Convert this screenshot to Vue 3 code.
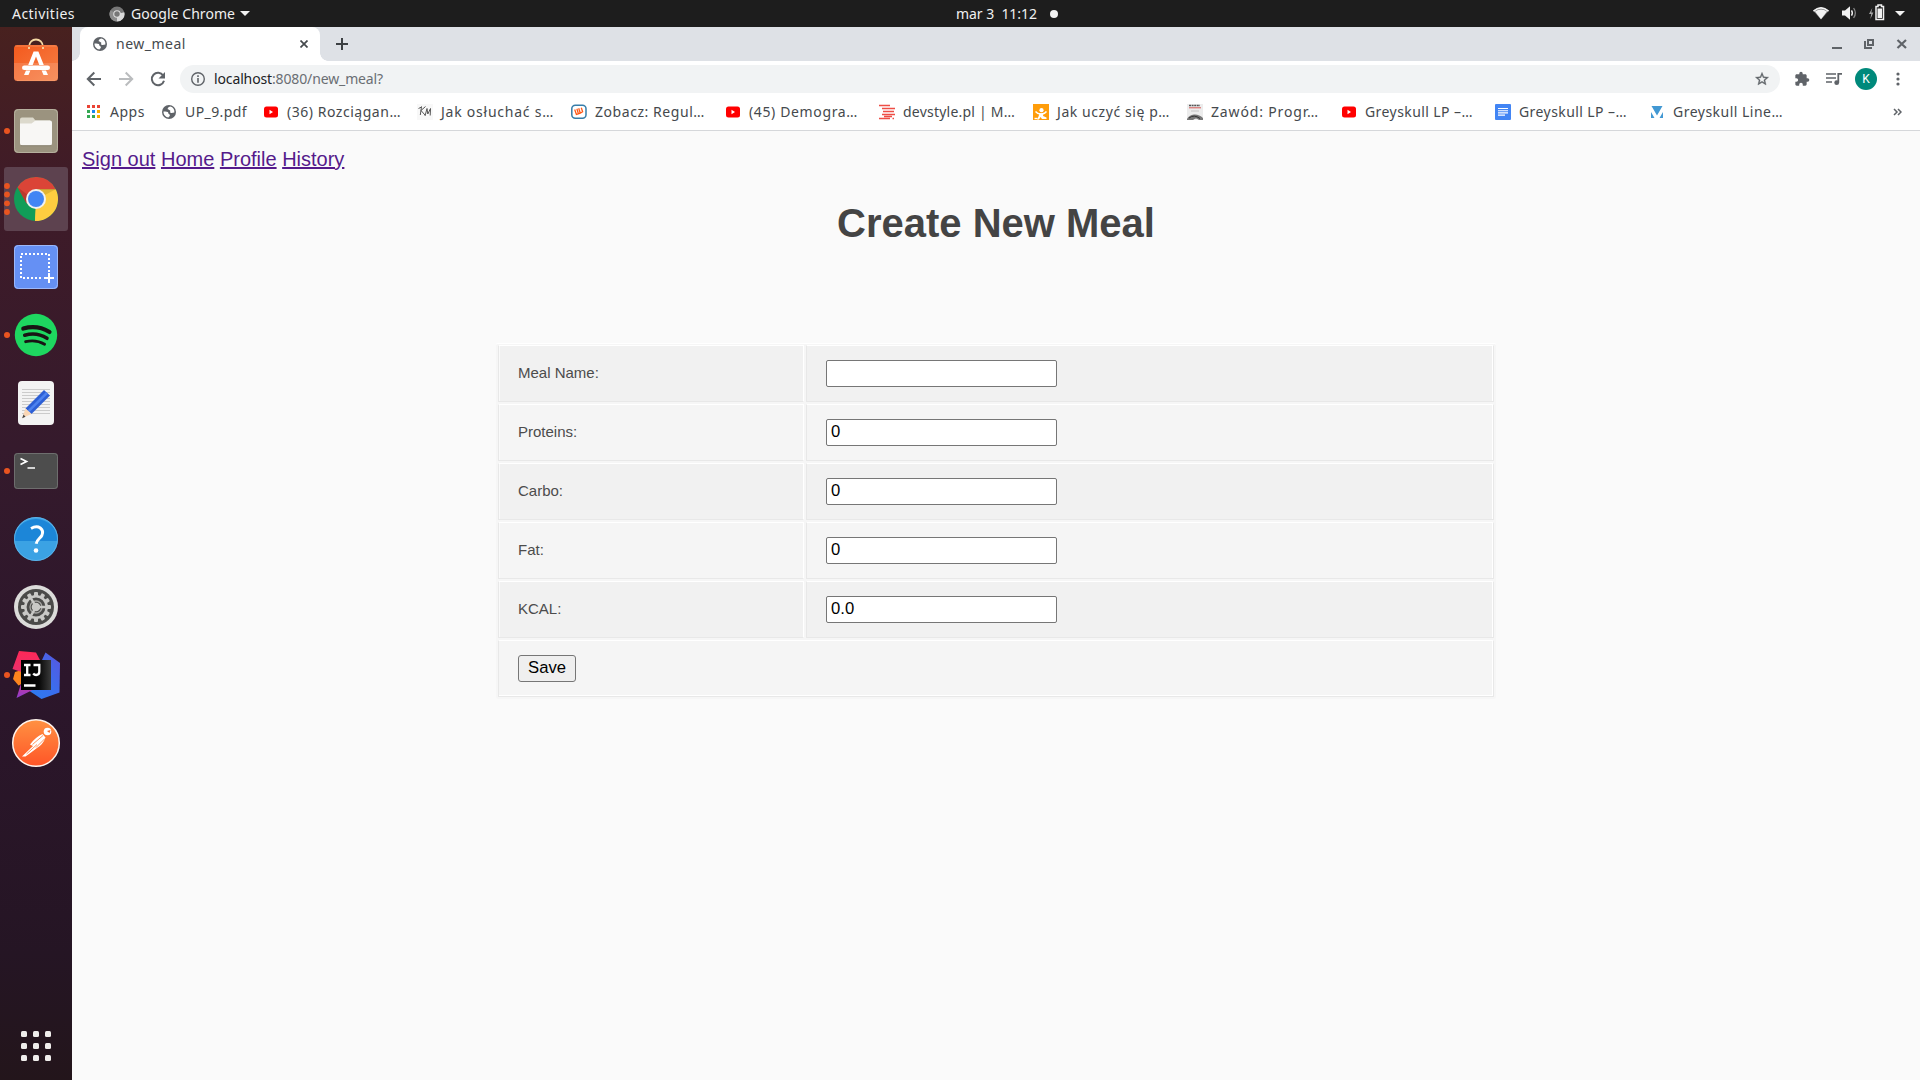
<script setup>
import { ref } from 'vue'

// Spreads the letters of a label so that it fills the given width in pixels.
const vFit = {
  mounted(el, { value }) {
    const range = document.createRange()
    range.selectNodeContents(el)
    const natural = range.getBoundingClientRect().width
    el.style.letterSpacing = (value - natural) / el.textContent.length + 'px'
  },
}

const bookmarks = [
  { icon: 'apps', text: 'Apps', fit: 35, width: 75 },
  { icon: 'globe', text: 'UP_9.pdf', fit: 62, width: 102 },
  { icon: 'youtube', text: '(36) Rozciągan…', fit: 114, width: 154 },
  { icon: 'km', text: 'Jak osłuchać s…', fit: 113, width: 154 },
  { icon: 'wykop', text: 'Zobacz: Regul…', fit: 110, width: 154 },
  { icon: 'youtube', text: '(45) Demogra…', fit: 109, width: 154 },
  { icon: 'devstyle', text: 'devstyle.pl | M…', fit: 112, width: 154 },
  { icon: 'orange', text: 'Jak uczyć się p…', fit: 113, width: 154 },
  { icon: 'book', text: 'Zawód: Progr…', fit: 108, width: 154 },
  { icon: 'youtube', text: 'Greyskull LP –…', fit: 108, width: 154 },
  { icon: 'docs', text: 'Greyskull LP –…', fit: 108, width: 154 },
  { icon: 'vee', text: 'Greyskull Line…', fit: 110, width: 154 },
]

const fields = ref([
  { label: 'Meal Name:', value: '' },
  { label: 'Proteins:', value: '0' },
  { label: 'Carbo:', value: '0' },
  { label: 'Fat:', value: '0' },
  { label: 'KCAL:', value: '0.0' },
])

const links = ['Sign out', 'Home', 'Profile', 'History']
const teeth = Array.from({ length: 12 }, (_, i) => i * 30)
const globeLand = 'M9.300 2.600C7.300 3 6.200 4.300 6.900 5.400c.6.9 2 .3 2.300 1.200.3 1-.6 1.500.3 2.200.9.600 2.300.2 3.900-.2.4-2.800-1.200-5.300-4.100-6zM2.500 7.500c1.600-.2 3.300-.2 4.300.5.8.6.2 1.500 1 2 .8.400 1.300.9 1 1.800-.2.700-.9.600-1.300 1.800C4.700 13.200 2.300 10.700 2.500 7.500z'
</script>

<template>
  <div class="desktop">
    <header class="panel">
      <div class="panel-left">
        <span v-fit="63" class="activities">Activities</span>
        <svg class="mini-chrome" width="16" height="16" viewBox="0 0 16 16">
          <circle cx="8" cy="8" r="7.500" fill="#777" />
          <path d="M8 8 15.300 6.200A7.500 7.500 0 0 1 8 15.500z" fill="#d8d8d8" />
          <path d="M8 8 1.500 4.200A7.500 7.500 0 0 0 8 15.500z" fill="#8d8d8d" />
          <circle cx="8" cy="8" r="3.800" fill="#ddd" />
          <circle cx="8" cy="8" r="2.700" fill="#777" />
        </svg>
        <span v-fit="104" class="app-name">Google Chrome</span>
        <svg class="tri" width="10" height="5" viewBox="0 0 10 5"><path d="M0 0h10L5 5z" fill="#f2f2f2" /></svg>
      </div>
      <div class="clock">
        <span v-fit="81" class="time">mar 3&nbsp; 11:12</span>
        <i class="notice"></i>
      </div>
      <svg class="status" width="100" height="27" viewBox="1810 0 100 27">
        <path d="M1813 10.500Q1821 3.500 1829 10.500L1821 19.500z" fill="#777" />
        <path d="M1813 10.500Q1821 3.500 1829 10.500L1828 11.700Q1821 5.800 1814 11.700z" fill="#f2f2f2" />
        <path d="M1815 11.600Q1821 7.200 1827 11.600L1821 19.300z" fill="#f2f2f2" />
        <path d="M1842 10.500h3l5-4.200v13.400l-5-4.200h-3z" fill="#f2f2f2" />
        <path d="M1851.500 10.300q1.700 2.700 0 5.400" fill="none" stroke="#f2f2f2" stroke-width="1.400" />
        <path d="M1853.600 8q3.500 5 0 10" fill="none" stroke="#888" stroke-width="1.300" />
        <path d="M1872.300 8l-3.300 6h2.200l-.8 5 3-6.500h-2.100z" fill="#a5a5a5" />
        <path d="M1876 6.500h2V5h3.500v1.500h2v13h-7.500z" fill="none" stroke="#f2f2f2" stroke-width="1.500" />
        <path d="M1877.500 8.500h4.500v9.500h-4.500z" fill="#f2f2f2" />
        <path d="M1895 11h10l-5 5z" fill="#f2f2f2" />
      </svg>
    </header>

    <div class="workspace">
      <aside class="dock">
        <svg class="launcher" viewBox="0 0 72 68">
          <defs>
            <linearGradient id="bag" x1="0" y1="0" x2="1" y2="1"><stop offset="0" stop-color="#f4591d" /><stop offset="1" stop-color="#f68046" /></linearGradient>
          </defs>
          <path d="M29 18c0-10 14-10 14 0" fill="none" stroke="#f5d9a4" stroke-width="1.800" />
          <rect x="14" y="16" width="44" height="36" rx="3.500" fill="url(#bag)" />
          <path d="M14 34h44v14.500a3.500 3.500 0 0 1-3.500 3.500h-37a3.500 3.500 0 0 1-3.500-3.500z" fill="#fff" opacity=".14" />
          <path d="M15 17h42M17 51.600h38" stroke="#f9a070" stroke-width=".8" opacity=".8" />
          <path d="M29 18v2M43 18v2" stroke="#f5d9a4" stroke-width="1.800" />
          <path d="M33.600 22.500h4.800L43.800 36h-4.500L36 27.500 32.700 36h-4.500z" fill="#fff" />
          <path d="M26 41.500h4.400L28.500 46H24zM46 41.500h-4.400l1.900 4.500H48z" fill="#fff" />
          <rect x="22" y="36.500" width="28" height="4.600" rx="2.300" fill="#fff" />
        </svg>

        <svg class="launcher" viewBox="0 0 72 68">
          <circle cx="7" cy="34" r="3" fill="#e95420" />
          <rect x="14" y="12" width="44" height="44" rx="4" fill="#9b937f" />
          <rect x="14.500" y="12.500" width="43" height="43" rx="4" fill="none" stroke="#b6b09e" />
          <path d="M20 22.500a2 2 0 0 1 2-2h11l2.500 3H50v8H20z" fill="#dcd9cc" />
          <path d="M20 26.500h11.500l4-3H50a2 2 0 0 1 2 2V46a2.500 2.500 0 0 1-2.500 2.500h-27A2.500 2.500 0 0 1 20 46z" fill="#f8f7f5" />
          <path d="M21 48.700h30" stroke="#7f7867" stroke-width=".8" />
        </svg>

        <svg class="launcher" viewBox="0 0 72 68">
          <rect x="4" y="2" width="64" height="64" rx="3" fill="#5d424f" />
          <circle v-for="y in [21, 29.500, 38.300, 47]" :key="y" cx="7" :cy="y" r="2.900" fill="#e95420" />
          <circle cx="36" cy="34" r="22" fill="#109d58" />
          <path d="M36 34L35 56A22 22 0 0 0 55.700 24.200H36z" fill="#fecd40" />
          <path d="M35 56 45.500 38.500 36 44z" fill="#fecd40" />
          <path d="M17.500 22.200A22 22 0 0 1 55.700 24.200H36L26.600 38.500z" fill="#db4437" />
          <path d="M36 24.200h19.700L45 30z" fill="#c09a25" opacity=".45" />
          <path d="M17.500 22.200l9.100 16.300 2-8z" fill="#8e2c20" opacity=".4" />
          <circle cx="36" cy="34" r="10" fill="#f1f1f1" />
          <circle cx="36" cy="34" r="8" fill="#4285f4" />
        </svg>

        <svg class="launcher" viewBox="0 0 72 68">
          <rect x="14" y="12" width="44" height="44" rx="4" fill="#6590f4" />
          <rect x="14.500" y="12.500" width="43" height="43" rx="4" fill="none" stroke="#9cb8fa" />
          <rect x="21" y="21" width="28" height="24" fill="none" stroke="#fff" stroke-width="2" stroke-dasharray="2 2" />
          <rect x="43" y="40" width="12" height="11" fill="#6590f4" />
          <path d="M44 45h10M49 40v10" stroke="#fff" stroke-width="2" />
        </svg>

        <svg class="launcher" viewBox="0 0 72 68">
          <circle cx="7" cy="34" r="3" fill="#e95420" />
          <circle cx="36" cy="34" r="21.200" fill="#1ed760" />
          <g fill="none" stroke="#191414" stroke-linecap="round">
            <path d="M23.300 27.600q14-4 26.200 3.400" stroke-width="4.200" />
            <path d="M24.700 34.300q12-3.500 22.300 3" stroke-width="3.500" />
            <path d="M25.600 40.700q10.500-2.600 19 2.600" stroke-width="2.800" />
          </g>
        </svg>

        <svg class="launcher" viewBox="0 0 72 68">
          <rect x="18" y="12" width="36" height="44" rx="4" fill="#f3f3f3" />
          <path d="M22 20.500h28M22 23.500h28M22 26.500h28M22 29.500h28M22 32.500h28M22 35.500h28M22 38.500h28M22 41.500h28M22 44.500h28" stroke="#cbcbcb" />
          <path d="M25.500 39.500 44 21l6 5.500L31.500 45z" fill="#2d5fd5" />
          <path d="M27.500 41.500 46 23l2 1.700L29.300 43.300z" fill="#4c82ef" />
          <path d="M25.500 39.500l6 5.500-9.300 4z" fill="#f9d6b5" />
          <path d="M23.500 45.500l2 2.200-3.300 1.500z" fill="#444" />
        </svg>

        <svg class="launcher" viewBox="0 0 72 68">
          <circle cx="7" cy="34" r="3" fill="#e95420" />
          <rect x="14" y="16" width="44" height="36" rx="3.500" fill="#4d4d4d" />
          <rect x="14.500" y="16.500" width="43" height="35" rx="3" fill="none" stroke="#777" stroke-width=".8" />
          <path d="M20.500 21.500l6 2.900-6 3M27.500 31h7.500" fill="none" stroke="#fff" stroke-width="1.700" />
        </svg>

        <svg class="launcher" viewBox="0 0 72 68">
          <circle cx="36" cy="34" r="22" fill="#3ba2e4" />
          <path d="M14 36a22 22 0 1 1 44 0z" fill="#1c86d8" />
          <circle cx="36" cy="34" r="21.500" fill="none" stroke="#63b6ea" stroke-width=".8" />
          <path d="M31 23.500q5.500-3 9.300-.5 3.700 3 1.500 7.500c-1.500 2.800-5 4-5.600 8.200" fill="none" stroke="#fff" stroke-width="3" />
          <circle cx="36" cy="45.500" r="2.300" fill="#fff" />
        </svg>

        <svg class="launcher" viewBox="0 0 72 68">
          <circle cx="36" cy="34" r="22" fill="#dcdcda" />
          <circle cx="36" cy="34" r="18" fill="#4b4b49" />
          <g fill="#c9c9c6">
            <rect v-for="a in teeth" :key="a" x="34" y="19" width="4" height="5" rx="1" :transform="`rotate(${a} 36 34)`" />
          </g>
          <circle cx="36" cy="34" r="10.700" fill="none" stroke="#c9c9c6" stroke-width="2.500" />
          <circle cx="36" cy="34" r="6" fill="none" stroke="#a5a5a2" stroke-width="1.300" />
          <path d="M36 34h10M36 34l-5-8.700M36 34l-5 8.700" stroke="#c9c9c6" stroke-width="2.500" />
          <circle cx="36" cy="34" r="4.300" fill="#c9c9c6" />
        </svg>

        <svg class="launcher" viewBox="0 0 72 68">
          <defs>
            <linearGradient id="ijBlue" x1="0" y1="1" x2="1" y2="0"><stop offset="0" stop-color="#2a7df0" /><stop offset=".5" stop-color="#3a6eee" /><stop offset="1" stop-color="#5a55dd" /></linearGradient>
            <linearGradient id="ijRed" x1="0" y1="0" x2="0" y2="1"><stop offset="0" stop-color="#fe2857" /><stop offset=".5" stop-color="#e8316f" /><stop offset="1" stop-color="#8f3dd0" /></linearGradient>
            <linearGradient id="ijBlack" x1="0" y1="0" x2="1" y2="0"><stop offset="0" stop-color="#000" /><stop offset=".6" stop-color="#080808" /><stop offset="1" stop-color="#3a3a3a" /></linearGradient>
          </defs>
          <circle cx="7" cy="34" r="3" fill="#e95420" />
          <path d="M15 31l6.500-2v14l-3 1.500-5.500-6.500z" fill="#fc841d" />
          <path d="M45.500 11.500 60 22l-.5 29.500L41.500 58 28 49z" fill="url(#ijBlue)" />
          <path d="M19 10 36 11.500 40.500 20v25L16.500 57l5-16V31l-9-3z" fill="url(#ijRed)" />
          <rect x="21" y="19" width="30" height="30" fill="url(#ijBlack)" />
          <path d="M24 24h6.500M24 34h6.500M27.200 24v10M33.500 24h5.800v6.800q0 3.200-3.200 3.200-1.700 0-2.900-1.500M24 44.500h11.500" fill="none" stroke="#fff" stroke-width="2.300" />
        </svg>

        <svg class="launcher" viewBox="0 0 72 68">
          <defs>
            <linearGradient id="post" x1="0" y1="0" x2="0" y2="1"><stop offset="0" stop-color="#ff9142" /><stop offset="1" stop-color="#ff5527" /></linearGradient>
          </defs>
          <circle cx="36" cy="34" r="23.300" fill="url(#post)" stroke="#fdf3ec" stroke-width="1.500" />
          <circle cx="47.500" cy="22.500" r="3.800" fill="#fff" />
          <path d="M47 22l3.500-1-1 3z" fill="#f76b2f" />
          <path d="M30 35.500q5.500-7.500 12.500-10.500l3 3.500Q43 35.500 37 39L31 43.500 25.500 47.500H22l11-10.500z" fill="#fff" />
          <path d="M32.500 35.500 43 26.500M36 38.500 45 29.500M26.500 45 37 35.500" stroke="#ff7a38" stroke-width=".8" />
        </svg>

        <div class="app-grid"><i v-for="n in 9" :key="n"></i></div>
      </aside>

      <section class="browser">
        <div class="tabstrip">
          <div class="tab">
            <svg width="16" height="16" viewBox="0 0 16 16"><circle cx="8" cy="8" r="7" fill="#5f6368" /><path :d="globeLand" fill="#fff" /></svg>
            <span v-fit="70" class="tab-title">new_meal</span>
            <svg width="8" height="8" viewBox="0 0 8 8"><path d="M.5.5l7 7M7.500.5l-7 7" stroke="#45494d" stroke-width="1.700" /></svg>
          </div>
          <svg class="plus" width="12" height="12" viewBox="0 0 12 12"><path d="M6 0v12M0 6h12" stroke="#3c4043" stroke-width="2" /></svg>
          <svg class="window-buttons" width="80" height="34" viewBox="1830 27 80 34">
            <g fill="none" stroke="#5f6368" stroke-width="2">
              <path d="M1832 48h10" />
              <path d="M1868 40h5v5h-5z" /><path d="M1865 41v7h7" />
              <path d="M1897.500 40l8.500 8M1906 40l-8.500 8" stroke-width="2.200" />
            </g>
          </svg>
        </div>

        <div class="toolbar">
          <svg class="nav" width="96" height="34" viewBox="82 62 96 34">
            <g fill="none" stroke-width="2">
              <path d="M101 79H88M94.300 72.500 87.800 79l6.500 6.500" stroke="#5f6368" />
              <path d="M119 79h13M125.700 72.500l6.500 6.500-6.500 6.500" stroke="#babcbe" />
              <path d="M163.200 75.500a6.200 6.200 0 1 0 .8 5.200" stroke="#5f6368" />
            </g>
            <path d="M165 72v6.500h-6.500z" fill="#5f6368" />
          </svg>
          <div class="address">
            <svg width="16" height="16" viewBox="0 0 16 16">
              <circle cx="8" cy="8" r="6.300" fill="none" stroke="#5f6368" stroke-width="1.400" />
              <path d="M7.200 4.300h1.600v1.600H7.200zM7.200 7h1.600v4.700H7.200z" fill="#5f6368" />
            </svg>
            <span v-fit="169" class="url"><b>localhost</b>:8080/new_meal?</span>
            <svg width="16" height="16" viewBox="0 0 24 24"><path d="M22 9.240l-7.190-.62L12 2 9.190 8.630 2 9.240l5.460 4.730L5.820 21 12 17.270 18.180 21l-1.630-7.030zM12 15.400l-3.760 2.270 1-4.280-3.320-2.880 4.380-.38L12 6.100l1.710 4.040 4.380.38-3.320 2.880 1 4.280z" fill="#5f6368" stroke="#5f6368" stroke-width=".5" /></svg>
          </div>
          <div class="tools">
            <svg width="16" height="16" viewBox="0 0 24 24"><path d="M20.500 11H19V7c0-1.100-.9-2-2-2h-4V3.500a2.500 2.500 0 0 0-5 0V5H4c-1.100 0-2 .9-2 2v3.800h1.500a2.700 2.700 0 0 1 0 5.400H2V20c0 1.100.9 2 2 2h3.800v-1.500a2.700 2.700 0 0 1 5.400 0V22H17c1.100 0 2-.9 2-2v-4h1.500a2.500 2.500 0 0 0 0-5z" fill="#5f6368" /></svg>
            <svg width="16" height="14" viewBox="0 0 16 14"><path d="M0 2h10M0 6h10M0 10h6" stroke="#5f6368" stroke-width="1.700" /><path d="M12.300 10.500V1.800H16" fill="none" stroke="#5f6368" stroke-width="1.800" /><circle cx="10.700" cy="10.700" r="2.400" fill="#5f6368" /></svg>
            <span class="avatar">K</span>
            <svg width="4" height="14" viewBox="0 0 4 14"><circle cx="2" cy="2" r="1.600" fill="#5f6368" /><circle cx="2" cy="7" r="1.600" fill="#5f6368" /><circle cx="2" cy="12" r="1.600" fill="#5f6368" /></svg>
          </div>
        </div>

        <nav class="bookmarks">
          <div v-for="(b, i) in bookmarks" :key="i" class="bookmark" :style="{ width: b.width + 'px' }">
            <svg width="16" height="16" viewBox="0 0 16 16">
              <g v-if="b.icon === 'apps'">
                <path d="M1 1h3v3H1zM6 1h3v3H6zM11 1h3v3h-3z" fill="#ea4335" />
                <path d="M1 6h3v3H1zM1 11h3v3H1zM6 11h3v3H6z" fill="#34a853" />
                <path d="M6 6h3v3H6z" fill="#1a88f0" />
                <path d="M11 6h3v3h-3zM11 11h3v3h-3z" fill="#f9ab00" />
              </g>
              <g v-else-if="b.icon === 'globe'">
                <circle cx="8" cy="8" r="7" fill="#5f6368" /><path :d="globeLand" fill="#fff" />
              </g>
              <g v-else-if="b.icon === 'youtube'">
                <rect x="1" y="2.500" width="14" height="11" rx="2.500" fill="#f00" /><path d="M6.500 5.700v4.600L10 8z" fill="#fff" />
              </g>
              <g v-else-if="b.icon === 'km'">
                <path d="M0 0h16v16H0z" fill="#f8f8f8" />
                <path d="M4.500 2.500 3.300 11M8.500 2.500 4 6.500l4 4.500M1.500 4.500 4.500 3M8 12l2-7.500.8 5.500 2.700-5.500-.3 7" fill="none" stroke="#555" stroke-width="1" />
              </g>
              <g v-else-if="b.icon === 'wykop'">
                <rect x=".8" y="1.300" width="14.200" height="12.900" rx="3.500" fill="#fff" stroke="#367da9" stroke-width="1.500" />
                <path d="M3.700 5.500l1.700 5 2-.7-1.500-5M7.300 9.900l2-.7-1.600-5M9.200 9.200l2.400-1.400-1.300-4" fill="none" stroke="#ff5917" stroke-width="1.300" />
              </g>
              <path v-else-if="b.icon === 'devstyle'" d="M0 1.500h11M3 4.500h13M4 7.500h11M3 10.500h13M0 14.500h11M13.500 14.500h1.500M5 12.500h8" stroke="#ee4e46" stroke-width="1.400" />
              <g v-else-if="b.icon === 'orange'">
                <path d="M0 0h16v16H0z" fill="#ff9d0a" /><circle cx="8.500" cy="6.200" r="2.100" fill="#fff" />
                <path d="M2.500 7.500q2.500 3 6 2.500 3.500-.3 5-2.500" fill="none" stroke="#fff" stroke-width="1.400" />
                <path d="M6.500 9.500h4l-.5 2.500 3.500 1.500v1.500H9L7.500 13 6 15.500H4l1.500-3z" fill="#fff" />
                <path d="M1.500 14.500h3" stroke="#fff" stroke-width="1.400" />
              </g>
              <g v-else-if="b.icon === 'book'">
                <path d="M0 0h16v16H0z" fill="#ececec" />
                <path d="M2 1.500h11" stroke="#555" stroke-width="1.300" stroke-dasharray="2 .6" /><path d="M2 3.800h12" stroke="#d65a58" stroke-width="1" />
                <path d="M4 7h8" stroke="#bbb" stroke-width=".8" />
                <path d="M0 15q2-4 7-4.500t9 3.500v2h-4q-3-3-6 0H0z" fill="#777" /><path d="M2 14q5-4 11 .5" stroke="#333" fill="none" />
              </g>
              <g v-else-if="b.icon === 'docs'">
                <rect width="16" height="16" rx="1" fill="#4285f4" /><path d="M3 4.500h10M3 6.700h10M3 8.900h10M3 11.100h7" stroke="#fff" stroke-width="1.100" />
              </g>
              <path v-else d="M2.500 2h11L8 11.500zM2 8v6h3.500zM14 8v6h-3.500z" fill="#4298d3" />
            </svg>
            <span v-fit="b.fit">{{ b.text }}</span>
          </div>
          <svg class="more" width="9" height="8" viewBox="0 0 9 8"><path d="M1 1l3 3-3 3M5 1l3 3-3 3" fill="none" stroke="#5f6368" stroke-width="1.500" /></svg>
        </nav>

        <main class="page">
          <div class="links"><template v-for="l in links" :key="l"><a href="#">{{ l }}</a>{{ ' ' }}</template></div>
          <h1>Create New Meal</h1>
          <form class="sheet" @submit.prevent>
            <div v-for="f in fields" :key="f.label" class="row">
              <label class="cell name">{{ f.label }}</label>
              <div class="cell value"><input v-model="f.value" type="text" /></div>
            </div>
            <div class="row"><div class="cell last"><button>Save</button></div></div>
          </form>
        </main>
      </section>
    </div>
  </div>
</template>

<style>
body { margin: 0; }
</style>

<style scoped>
.desktop { width: 1920px; height: 1080px; display: flex; flex-direction: column; overflow: hidden; font-family: "Noto Sans", "Open Sans", sans-serif; }
.desktop * { box-sizing: border-box; }
.desktop svg { display: block; flex: none; }
.desktop span { white-space: nowrap; }

.panel { height: 27px; flex: none; background: #1d1d1d; color: #f0f0f0; font-size: 14px; line-height: 26px; display: grid; grid-template-columns: 956px 1fr auto; padding-right: 10px; }
.panel-left { display: flex; align-items: center; padding-left: 12px; }
.activities { width: 62px; }
.mini-chrome { margin-left: 35px; }
.app-name { width: 104px; margin-left: 6px; }
.tri { margin-left: 5px; }
.clock { display: flex; align-items: center; }
.time { width: 81px; }
.notice { width: 8px; height: 8px; margin-left: 13px; border-radius: 50%; background: #f2f2f2; }

.workspace { flex: 1; display: flex; min-height: 0; }
.dock { width: 72px; flex: none; display: flex; flex-direction: column; padding-top: 2px; background: linear-gradient(#48211f, #3f1b28 15%, #351a2c 40%, #2c162b 62%, #251524 88%, #23151b); }
.launcher { width: 72px; height: 68px; }
.app-grid { margin: auto 0 19px 21px; display: grid; grid-template-columns: repeat(3, 6px); gap: 6px; }
.app-grid i { height: 6px; border-radius: 1.5px; background: #f0eeec; }

.browser { flex: 1; min-width: 0; display: flex; flex-direction: column; background: #fff; }
.tabstrip { height: 34px; flex: none; display: flex; align-items: center; background: #dee1e6; padding-left: 8px; }
.tab { position: relative; width: 240px; height: 34px; display: flex; align-items: center; padding: 0 12px; background: #fff; border-radius: 8px 8px 0 0; }
.tab::before, .tab::after { content: ""; position: absolute; bottom: 0; width: 8px; height: 8px; }
.tab::before { left: -8px; background: radial-gradient(circle at 0 0, transparent 7.5px, #fff 8px); }
.tab::after { right: -8px; background: radial-gradient(circle at 100% 0, transparent 7.5px, #fff 8px); }
.tab-title { flex: 1; margin-left: 8px; font-size: 14px; line-height: 34px; color: #45494d; }
.plus { margin-left: 16px; }
.window-buttons { margin: 0 10px 0 auto; }

.toolbar { height: 36px; flex: none; display: flex; align-items: center; padding-left: 10px; }
.nav { margin-right: 2px; }
.address { width: 1600px; height: 28px; display: flex; align-items: center; padding: 0 10px; border-radius: 14px; background: #f1f3f4; }
.url { flex: 1; margin-left: 8px; font-size: 14px; line-height: 26px; color: #6a6e73; }
.url b { font-weight: 400; color: #202124; }
.tools { display: flex; align-items: center; margin-left: 14px; }
.tools svg:nth-child(2) { margin-left: 16px; }
.avatar { width: 22px; height: 22px; margin: 0 19px 0 13px; border-radius: 50%; background: #00897b; color: #fff; font: 12px/22px Roboto, sans-serif; text-align: center; }

.bookmarks { height: 34px; flex: none; display: flex; align-items: center; padding: 0 18px 4px 14px; border-bottom: 1px solid #d5d7da; }
.bookmark { flex: none; display: flex; align-items: center; gap: 8px; height: 24px; font-size: 14px; line-height: 24px; color: #45494d; }
.bookmark span { height: 24px; }
.more { margin-left: auto; }

.page { flex: 1; padding: 0 8px; background: #fafafa; color: #444; font-family: "Liberation Sans", Arial, sans-serif; }
.links { margin-top: 17px; padding-left: 2px; font-size: 20px; line-height: 23px; }
.links a { color: #551a8b; }
h1 { margin: 29px 0 0; font-size: 40px; line-height: 46px; text-align: center; }
.sheet { width: 1000px; margin: 97px auto 0; padding: 1px 2px 2px; border-top: 1px solid #fff; border-radius: 2px; background: #f6f6f6; display: flex; flex-direction: column; gap: 2px; }
.row { display: flex; gap: 2px; height: 57px; }
.cell { display: flex; align-items: center; padding-left: 19px; border-top: 1px solid #fff; border-bottom: 1px solid #e8e8e8; border-left: 1px solid #e8e8e8; background: #f5f5f5; font-size: 15px; box-shadow: inset 1px 0 #fafafa; }
.row:nth-child(odd) .cell { background: #f1f1f1; }
.name { width: 306px; border-right: 1px solid #fff; padding-bottom: 2px; color: #4c4c4c; }
.value { width: 688px; border-right: 1px solid #e8e8e8; box-shadow: inset -1px 0 #fff; }
.last { width: 996px; border-right: 1px solid #e8e8e8; box-shadow: inset -1px -1px #fff; }
input { width: 231px; height: 27px; margin: 0; padding: 0 4px 1px; border: 1px solid #767676; border-radius: 2px; background: #fff; color: #000; font: 16.67px "Liberation Sans", Arial, sans-serif; }
button { width: 58px; height: 27px; margin: 0; padding: 0 0 1px; border: 1px solid #767676; border-radius: 3px; background: #efefef; color: #000; font: 16.67px "Liberation Sans", Arial, sans-serif; }
</style>
